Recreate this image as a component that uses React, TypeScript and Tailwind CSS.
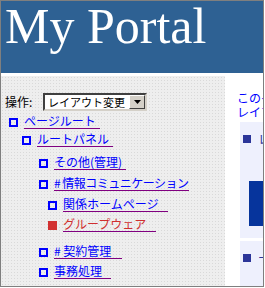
import React from "react";

type Item = {
  label: string;
  indent: string;
  mt: string;
  red?: boolean;
  pr: string;
};

const items: Item[] = [
  { label: "ページルート", indent: "ml-[8px]", mt: "mt-[2px]", pr: "pr-[4px]" },
  { label: "ルートパネル", indent: "ml-[21px]", mt: "mt-[2px]", pr: "pr-[4px]" },
  { label: "その他(管理)", indent: "ml-[38px]", mt: "mt-[7px]", pr: "pr-[4px]" },
  { label: "# 情報コミュニケーション", indent: "ml-[38px]", mt: "mt-[5px]", pr: "pr-0 tracking-[-0.5px]" },
  { label: "関係ホームページ", indent: "ml-[47px]", mt: "mt-[5px]", pr: "pr-[10px]" },
  { label: "グループウェア", indent: "ml-[47px]", mt: "mt-[4px]", red: true, pr: "pr-[10px]" },
  { label: "# 契約管理", indent: "ml-[38px]", mt: "mt-[11px]", pr: "pr-[11px]" },
  { label: "事務処理", indent: "ml-[38px]", mt: "mt-[4px]", pr: "pr-[9px]" },
];

export default function App() {
  return (
    <div className="w-[265px] h-[288px] bg-white">
      <div className="w-[264px] h-[287px] border border-[#7f7f7f] overflow-hidden flex flex-col">
        <div className="h-[72px] flex-none bg-[#2e6193] pl-[4px]">
          <div className="text-white text-[50px] leading-[50px] whitespace-nowrap font-['Liberation_Serif',serif]">
            My Portal
          </div>
        </div>
        <div className="flex-1 flex mt-[3px] min-h-0 font-['Noto_Sans_CJK_JP',sans-serif] text-[12px]">
          <div className="w-[224px] flex-none bg-[#eeeeee] bg-[radial-gradient(#d9d9d9_0.7px,transparent_0.8px)] bg-[length:3px_3px]">
            <div className="flex items-center mt-[17px] h-[18px]">
              <div className="w-[42px] pl-[4px] leading-[18px] text-black">操作:</div>
              <div className="w-[104px] h-[18px] flex bg-white border-2 border-t-[#404040] border-l-[#404040] border-b-[#d4d0c8] border-r-[#d4d0c8]">
                <div className="flex-1 pl-[3px] leading-[14px] text-[11px] text-black whitespace-nowrap overflow-hidden">
                  レイアウト変更
                </div>
                <div className="w-[16px] h-[14px] flex-none flex items-center justify-center bg-[#d4d0c8] border border-t-white border-l-white border-b-[#404040] border-r-[#404040]">
                  <svg width="7" height="4" viewBox="0 0 7 4">
                    <path d="M0 0H7L3.5 4Z" fill="#000" />
                  </svg>
                </div>
              </div>
            </div>
            {items.map((it) => (
              <div key={it.label} className={`flex items-start h-[16px] ${it.mt} ${it.indent}`}>
                <div
                  className={
                    it.red
                      ? "w-[9px] h-[9px] mt-[5px] flex-none bg-[#d23232]"
                      : "w-[9px] h-[9px] mt-[5px] flex-none border-2 border-[#0000ff]"
                  }
                />
                <span
                  className={`ml-[6px] inline-block whitespace-nowrap leading-[15px] border-b border-[#800080] ${it.pr} ${
                    it.red ? "text-[#d03030]" : "text-[#0000ff]"
                  }`}
                >
                  {it.label}
                </span>
              </div>
            ))}
          </div>
          <div className="w-[200px] flex-none ml-[7px] pt-[15px]">
            <div className="pl-[5px] text-[#0000ff] leading-[14px] whitespace-nowrap">
              <div>このインスタンスは</div>
              <div>レイアウト変更</div>
            </div>
            <div className="ml-[8px] mt-[3px] h-[116px] bg-[#eef0fd] pt-[13px]">
              <div className="flex items-center h-[8px] pl-[3px] gap-[7px]">
                <div className="w-[8px] h-[8px] bg-[#2b3599] flex-none" />
                <span className="text-[#2b3599] leading-[8px] whitespace-nowrap">レイアウト</span>
              </div>
              <div className="ml-[9px] mt-[38px] h-[45px] bg-[#06349c]" />
            </div>
            <div className="ml-[8px] mt-[3px] h-[60px] bg-[#eef0fd] pt-[13px]">
              <div className="flex items-center h-[8px] pl-[3px] gap-[7px]">
                <div className="w-[8px] h-[8px] bg-[#2b3599] flex-none" />
                <span className="text-[#2b3599] leading-[8px] whitespace-nowrap">ープ</span>
              </div>
            </div>
          </div>
        </div>
      </div>
    </div>
  );
}
